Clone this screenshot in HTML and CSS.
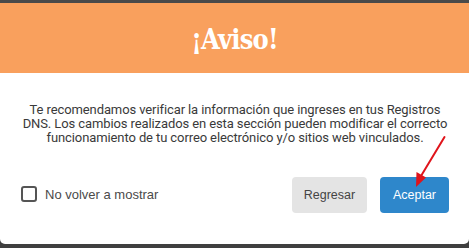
FILE: index.html
```html
<!DOCTYPE html>
<html lang="es">
<head>
<meta charset="utf-8">
<link rel="stylesheet" href="styles.css">
</head>
<body>
<div class="page">
  <div class="backdrop-top"></div>
  <div class="modal">
    <div class="modal-header">
      <h1 class="title">¡Aviso!</h1>
    </div>
    <div class="modal-body">
      <p class="message">Te recomendamos verificar la información que ingreses en tus Registros DNS. Los cambios realizados en esta sección pueden modificar el correcto funcionamiento de tu correo electrónico y/o sitios web vinculados.</p>
      <div class="footer">
        <label class="check">
          <span class="box"></span>
          <span class="check-label">No volver a mostrar</span>
        </label>
        <div class="actions">
          <button class="btn btn-secondary">Regresar</button>
          <button class="btn btn-primary">Aceptar</button>
        </div>
      </div>
    </div>
  </div>
  <svg class="arrow" width="469" height="248" viewBox="0 0 469 248">
    <line x1="444.5" y1="137" x2="421" y2="176" stroke="#e0141b" stroke-width="2" stroke-linecap="round"/>
    <polygon points="416,187 416.5,172 426,177.5" fill="#e0141b"/>
  </svg>
</div>
</body>
</html>
```
FILE: styles.css
```css
html, body {
  margin: 0;
  padding: 0;
}
body {
  background: #3f3f3f;
  width: 469px;
  height: 248px;
  overflow: hidden;
}
.page {
  position: relative;
  width: 469px;
  height: 248px;
}
.backdrop-top {
  height: 3px;
  background: #4a4a4a;
}
.modal {
  background: #ffffff;
  border-radius: 0 0 5px 5px;
  overflow: hidden;
}
.modal-header {
  height: 70px;
  background: #f9a05d;
  display: flex;
  align-items: center;
  justify-content: center;
}
.title {
  margin: 0;
  color: #ffffff;
  font-family: "DejaVu Serif", serif;
  font-stretch: condensed;
  font-weight: bold;
  font-size: 27px;
  letter-spacing: -0.8px;
  line-height: 1;
  padding-top: 2px;
}
.modal-body {
  height: 171px;
  box-sizing: border-box;
  padding: 30px 20px 0 21px;
}
.message {
  margin: 0 -2px;
  text-align: center;
  font-family: Roboto, "Liberation Sans", sans-serif;
  font-size: 13px;
  letter-spacing: -0.1px;
  line-height: 14px;
  color: #3a3a3a;
}
.footer {
  margin-top: 32px;
  display: flex;
  align-items: center;
  justify-content: space-between;
}
.check {
  display: flex;
  align-items: center;
  gap: 8px;
  margin-top: -2px;
}
.box {
  width: 12px;
  height: 12px;
  border: 2px solid #555555;
  border-radius: 3px;
  background: #ffffff;
}
.check-label {
  font-family: "Liberation Sans", Arial, sans-serif;
  font-size: 13px;
  color: #4a4a4a;
}
.actions {
  display: flex;
  gap: 13px;
}
.btn {
  height: 36px;
  border: none;
  border-radius: 4px;
  font-family: "Liberation Sans", Arial, sans-serif;
  font-size: 12.5px;
  padding: 0 10px;
}
.btn-secondary {
  width: 75px;
  background: #e4e4e4;
  color: #444444;
}
.btn-primary {
  width: 69px;
  background: #2e87cb;
  color: #ffffff;
}
.arrow {
  position: absolute;
  left: 0;
  top: 0;
  pointer-events: none;
}
```
